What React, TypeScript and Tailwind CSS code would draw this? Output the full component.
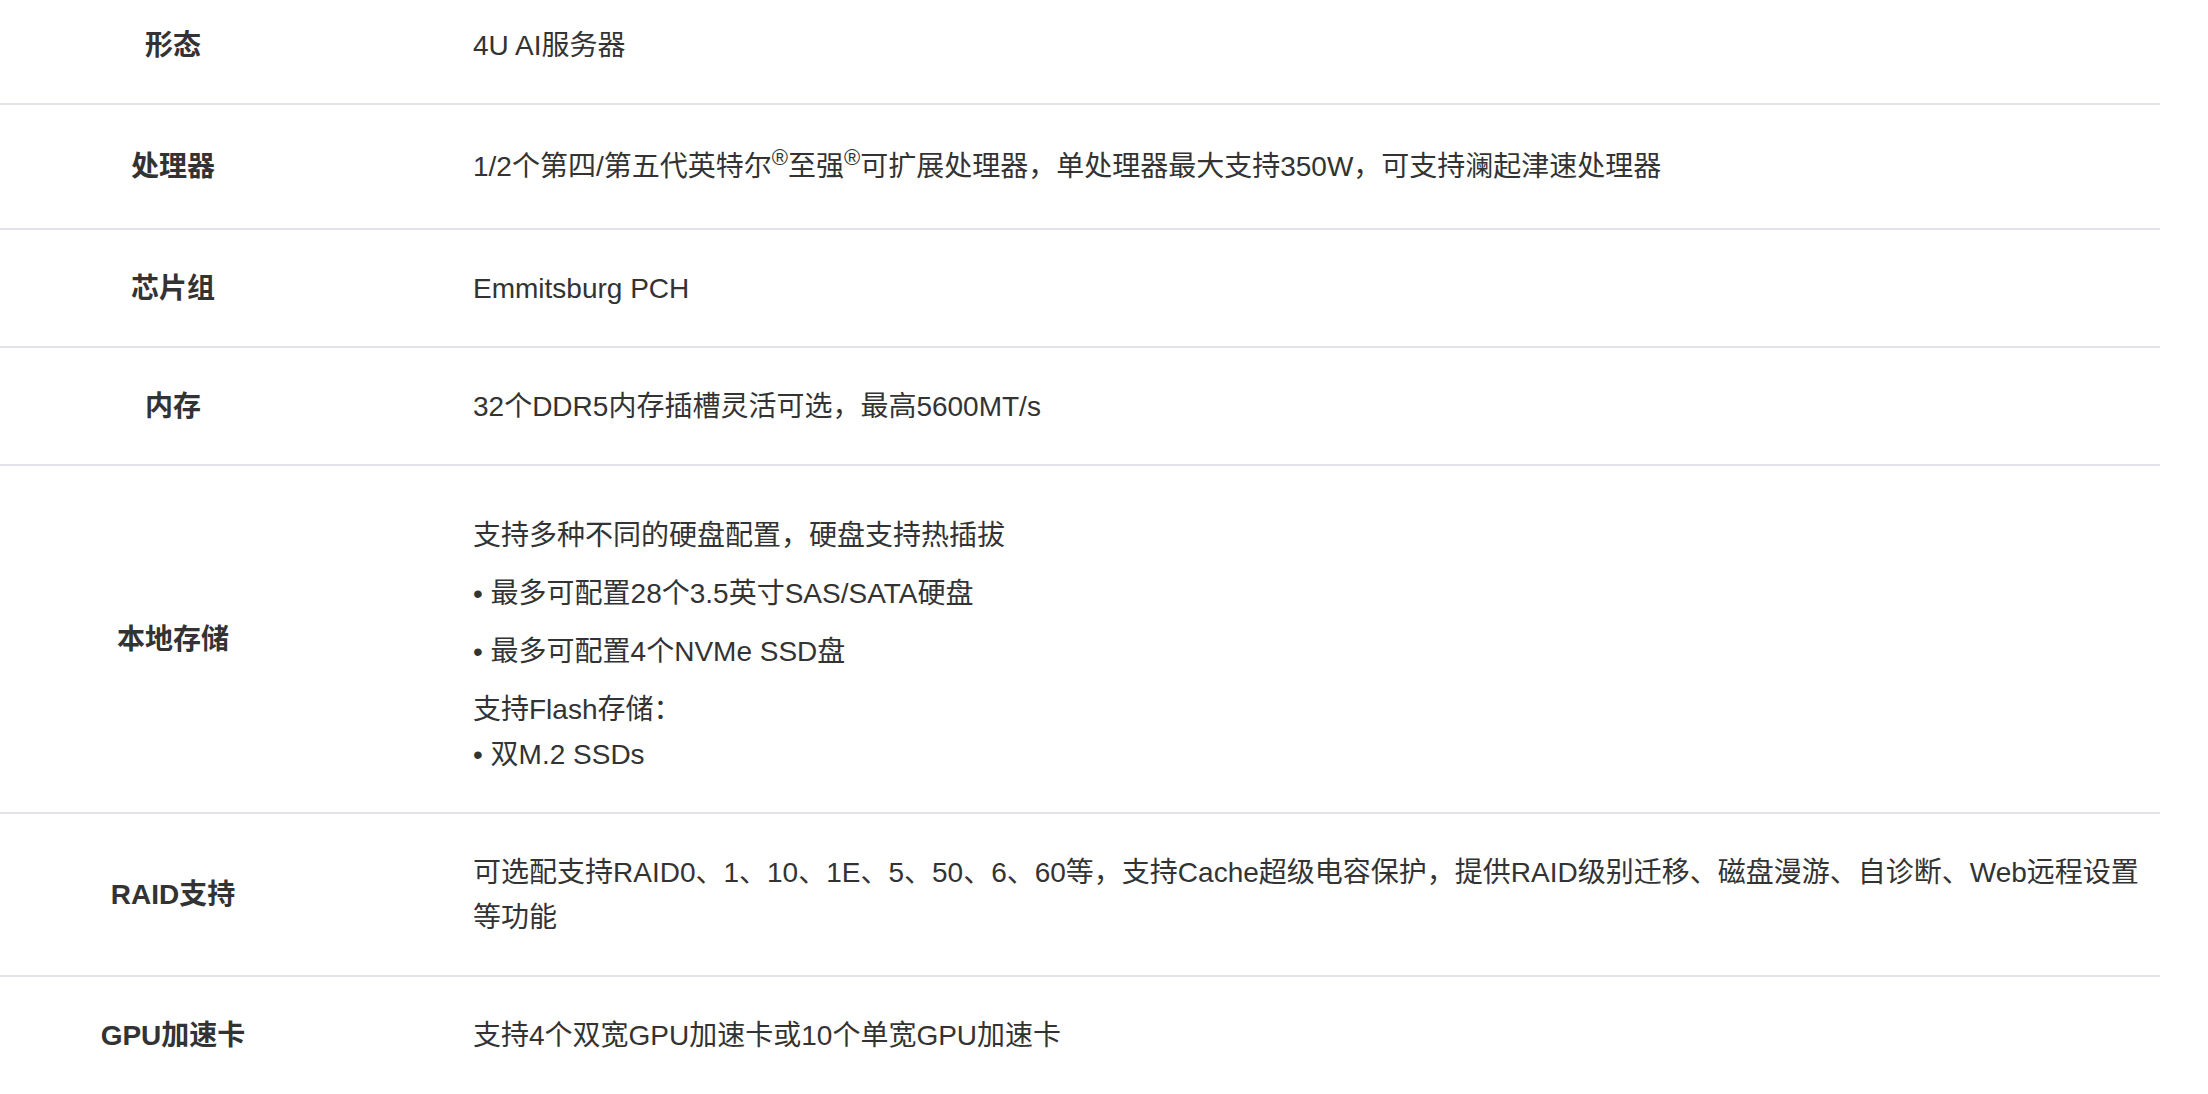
import React from "react";

const font = {
  fontFamily: '"Liberation Sans", "Noto Sans CJK SC", sans-serif',
};

function Row({
  label,
  children,
  cls = "pt-[36px] pb-[35px]",
  first = false,
  last = false,
}: {
  label: string;
  children: React.ReactNode;
  cls?: string;
  first?: boolean;
  last?: boolean;
}) {
  return (
    <div
      className={`flex ${last ? "" : "border-b-2 border-[#e1e3e9]"} ${first ? "-mt-[13px]" : ""}`}
    >
      <div className="w-[346px] shrink-0 flex items-center justify-center font-bold text-[#333333]">
        {label}
      </div>
      <div className={`flex-1 pl-[127px] pr-[10px] ${cls}`}>{children}</div>
    </div>
  );
}

export default function App() {
  return (
    <div className="w-[2208px] h-[1094px] overflow-hidden bg-white" style={font}>
      <div className="w-[2160px] text-[28px] leading-[45px] text-[#333333]">
        <Row label="形态" first>
          4U AI服务器
        </Row>
        <Row label="处理器" cls="pt-[39px] pb-[39px]">
          1/2个第四/第五代英特尔<sup className="text-[22px]">®</sup>至强<sup className="text-[22px]">®</sup>可扩展处理器，单处理器最大支持350W，可支持澜起津速处理器
        </Row>
        <Row label="芯片组">Emmitsburg PCH</Row>
        <Row label="内存">32个DDR5内存插槽灵活可选，最高5600MT/s</Row>
        <Row label="本地存储" cls="pt-[47px] pb-[35px]">
          <div className="flex flex-col gap-[13px]">
            <p>支持多种不同的硬盘配置，硬盘支持热插拔</p>
            <p>• 最多可配置28个3.5英寸SAS/SATA硬盘</p>
            <p>• 最多可配置4个NVMe SSD盘</p>
            <p>
              支持Flash存储：
              <br />• 双M.2 SSDs
            </p>
          </div>
        </Row>
        <Row label="RAID支持">
          可选配支持RAID0、1、10、1E、5、50、6、60等，支持Cache超级电容保护，提供RAID级别迁移、磁盘漫游、自诊断、Web远程设置
          <br />
          等功能
        </Row>
        <Row label="GPU加速卡" last>
          支持4个双宽GPU加速卡或10个单宽GPU加速卡
        </Row>
      </div>
    </div>
  );
}
